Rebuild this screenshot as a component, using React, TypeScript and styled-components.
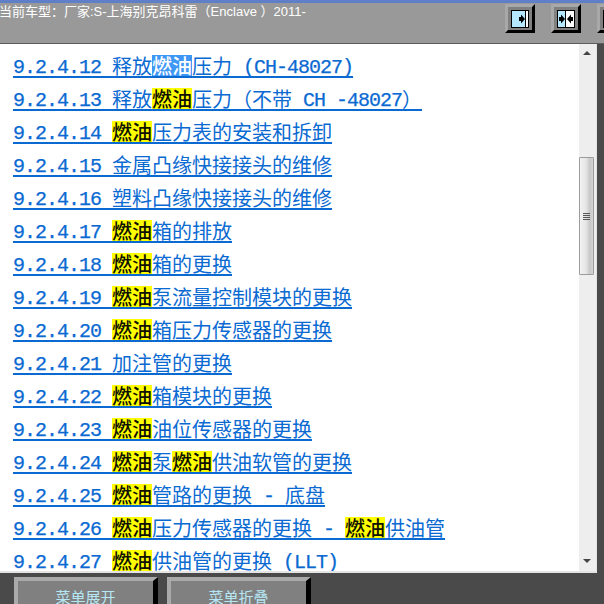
import React from "react"
import styled, { createGlobalStyle } from "styled-components"

const GlobalStyle = createGlobalStyle`
  html, body {
    margin: 0;
    padding: 0;
    background: #4a4a4a;
    overflow: hidden;
  }
`

const Frame = styled.div`
  width: 604px;
  height: 604px;
  display: flex;
  flex-direction: column;
  overflow: hidden;
  background: #4a4a4a;
  font-family: "Liberation Sans", "Noto Sans CJK SC", sans-serif;
`
const Header = styled.div`
  height: 44px;
  box-sizing: border-box;
  flex: none;
  display: flex;
  justify-content: space-between;
  background: #999999;
  border-top: 3px solid #5f7fc8;
  border-bottom: 1px solid #5c5c5c;
  overflow: hidden;
`
const CarTitle = styled.div`
  margin: 0 0 0 -1px;
  color: #ffffff;
  font-size: 13px;
  line-height: 18px;
  white-space: nowrap;
`
const ToolGroup = styled.div`
  display: flex;
  gap: 16px;
  padding-top: 1px;
  margin-right: -23px;
  flex: none;
`
const ToolButton = styled.div`
  width: 30px;
  height: 29px;
  box-sizing: border-box;
  display: flex;
  align-items: center;
  justify-content: center;
  background: #808080;
  border-style: solid;
  border-width: 3px;
  border-color: #a8a8a8 #000000 #000000 #a8a8a8;
`
const Body = styled.div`
  flex: 1;
  min-height: 0;
  display: flex;
  width: 597px;
  background: #ffffff;
  border-right: 1px solid #e4e4e4;
  border-bottom: 2px solid #e4e4e4;
  box-sizing: border-box;
`
const ListPanel = styled.div`
  flex: 1;
  min-width: 0;
  overflow: hidden;
  padding: 5px 0 0 13px;
`
const Row = styled.div`
  height: 33px;
  line-height: 33px;
  white-space: nowrap;
`
const TopicLink = styled.a`
  color: #0a6ad2;
  text-decoration: underline;
  text-decoration-thickness: 2px;
  text-underline-offset: 2px;
  text-decoration-skip-ink: none;
  font-family: "Liberation Mono", "Noto Sans CJK SC", monospace;
  font-size: 20px;
  letter-spacing: -1px;
`
const Latin = styled.span`
  white-space: pre;
  vertical-align: 1px;
  -webkit-text-stroke: 0.25px #0a6ad2;
`
const Han = styled.span`
  font-family: "Noto Sans CJK SC", sans-serif;
  font-size: 20px;
  letter-spacing: 0;
`
const Keyword = styled(Han)<{ $selected?: boolean }>`
  background: linear-gradient(
      ${props => (props.$selected ? "#3f97f5, #3f97f5" : "#ffff00, #ffff00")}
    )
    center / 100% 21px no-repeat;
  color: ${props => (props.$selected ? "#ffffff" : "#111100")};
  font-weight: 500;
`
const ScrollTrack = styled.div`
  width: 17px;
  flex: none;
  display: flex;
  flex-direction: column;
  align-items: center;
  padding-right: 2px;
  background: #eeeeee;
  box-sizing: border-box;
`
const ScrollArrow = styled.div<{ $down?: boolean }>`
  height: 0;
  width: 0;
  margin-top: ${props => (props.$down ? "auto" : "7px")};
  margin-bottom: ${props => (props.$down ? "8px" : "0")};
  border-left: 4px solid transparent;
  border-right: 4px solid transparent;
  border-bottom: ${props => (props.$down ? "0" : "4px solid #444444")};
  border-top: ${props => (props.$down ? "4px solid #444444" : "0")};
`
const ScrollThumb = styled.div`
  width: 15px;
  height: 118px;
  margin-top: 102px;
  box-sizing: border-box;
  display: flex;
  flex-direction: column;
  align-items: center;
  justify-content: center;
  gap: 1px;
  background: linear-gradient(90deg, #f2f2f2 0%, #e6e6e6 45%, #c8c8c8 75%, #d4d4d4 100%);
  border: 1px solid #9c9c9c;
  border-radius: 1px;
`
const ThumbGrip = styled.div`
  width: 7px;
  height: 1px;
  background: #555555;
`
const Footer = styled.div`
  height: 31px;
  flex: none;
  display: flex;
  gap: 9px;
  padding: 4px 0 0 14px;
  box-sizing: border-box;
  overflow: hidden;
`
const FooterButton = styled.div`
  width: 144px;
  height: 42px;
  flex: none;
  box-sizing: border-box;
  background: #808080;
  border-style: solid;
  border-width: 4px 5px 5px 4px;
  border-color: #aaaaaa #000000 #000000 #aaaaaa;
  color: #b6e6f4;
  font-size: 15px;
  line-height: 33px;
  text-align: center;
`

function ExpandIcon({ kind }: { kind: "right" | "both" | "left" }) {
  return (
    <svg width="18" height="18" viewBox="0 0 18 18">
      <rect x="0" y="0" width="18" height="18" fill="#000000" />
      {kind === "right" && (
        <>
          <rect x="1" y="1" width="13" height="16" fill="#b5e7fd" />
          <rect x="15" y="1" width="2" height="16" fill="#ffffff" />
          <path d="M8 7 L10 7 L10 4.5 L14 9 L10 13.5 L10 11 L8 11 Z" fill="#000000" />
        </>
      )}
      {kind === "both" && (
        <>
          <rect x="1" y="1" width="7" height="16" fill="#b5e7fd" />
          <rect x="9" y="1" width="8" height="16" fill="#ffffff" />
          <path d="M2 7 L4 7 L4 4.5 L8 9 L4 13.5 L4 11 L2 11 Z" fill="#000000" />
          <path d="M16 7 L14 7 L14 4.5 L10 9 L14 13.5 L14 11 L16 11 Z" fill="#000000" />
        </>
      )}
      {kind === "left" && (
        <>
          <rect x="1" y="1" width="2" height="16" fill="#ffffff" />
          <rect x="4" y="1" width="13" height="16" fill="#b5e7fd" />
          <path d="M10 7 L8 7 L8 4.5 L4 9 L8 13.5 L8 11 L10 11 Z" fill="#000000" />
        </>
      )}
    </svg>
  )
}

const topics = [
  "9.2.4.12 释放燃油压力 (CH-48027)",
  "9.2.4.13 释放燃油压力（不带 CH -48027）",
  "9.2.4.14 燃油压力表的安装和拆卸",
  "9.2.4.15 金属凸缘快接接头的维修",
  "9.2.4.16 塑料凸缘快接接头的维修",
  "9.2.4.17 燃油箱的排放",
  "9.2.4.18 燃油箱的更换",
  "9.2.4.19 燃油泵流量控制模块的更换",
  "9.2.4.20 燃油箱压力传感器的更换",
  "9.2.4.21 加注管的更换",
  "9.2.4.22 燃油箱模块的更换",
  "9.2.4.23 燃油油位传感器的更换",
  "9.2.4.24 燃油泵燃油供油软管的更换",
  "9.2.4.25 燃油管路的更换 - 底盘",
  "9.2.4.26 燃油压力传感器的更换 - 燃油供油管",
  "9.2.4.27 燃油供油管的更换 (LLT)",
]

function TopicText({ text, first }: { text: string; first: boolean }) {
  // keyword first, then the rest splits into latin and han runs
  const parts = text
    .split(/(燃油)/)
    .flatMap(part => (part === "燃油" ? [part] : part.split(/([^\x00-\x7f]+)/)))
    .filter(Boolean)
  return (
    <TopicLink>
      {parts.map((part, i) => {
        if (part === "燃油") return <Keyword key={i} $selected={first}>{part}</Keyword>
        if (/[^\x00-\x7f]/.test(part)) return <Han key={i}>{part}</Han>
        return <Latin key={i}>{part}</Latin>
      })}
    </TopicLink>
  )
}

export default function App() {
  return (
    <Frame>
      <GlobalStyle />
      <Header>
        <CarTitle>当前车型：厂家:S-上海别克昂科雷（Enclave ）2011-</CarTitle>
        <ToolGroup>
          <ToolButton><ExpandIcon kind="right" /></ToolButton>
          <ToolButton><ExpandIcon kind="both" /></ToolButton>
          <ToolButton><ExpandIcon kind="left" /></ToolButton>
        </ToolGroup>
      </Header>
      <Body>
        <ListPanel>
          {topics.map((topic, i) => (
            <Row key={topic}>
              <TopicText text={topic} first={i === 0} />
            </Row>
          ))}
        </ListPanel>
        <ScrollTrack>
          <ScrollArrow />
          <ScrollThumb>
            <ThumbGrip />
            <ThumbGrip />
            <ThumbGrip />
            <ThumbGrip />
          </ScrollThumb>
          <ScrollArrow $down />
        </ScrollTrack>
      </Body>
      <Footer>
        <FooterButton>菜单展开</FooterButton>
        <FooterButton>菜单折叠</FooterButton>
      </Footer>
    </Frame>
  )
}
